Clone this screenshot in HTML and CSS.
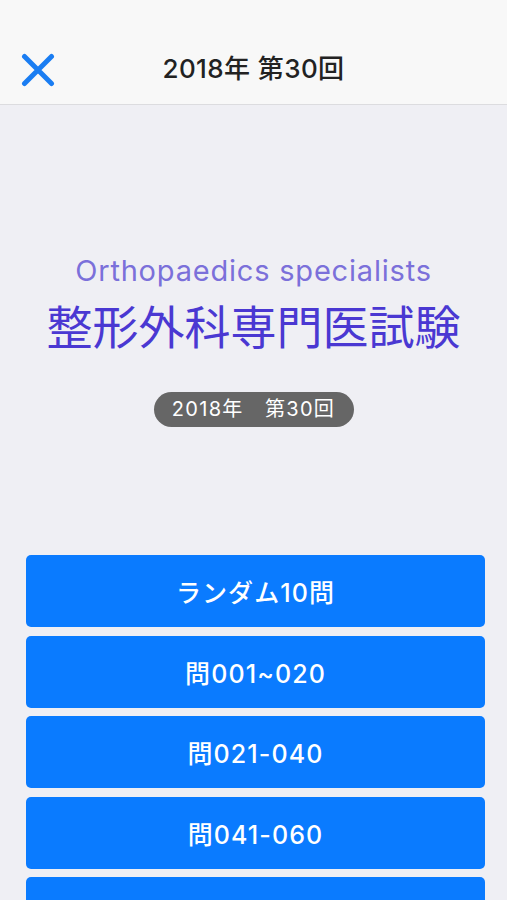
FILE: index.html
```html
<!DOCTYPE html>
<html lang="ja">
<head>
<meta charset="utf-8">
<title>2018年 第30回</title>
<link rel="stylesheet" href="styles.css">
</head>
<body>
<header class="navbar">
  <button class="close" aria-label="閉じる">
    <svg width="34" height="34" viewBox="0 0 34 34"><path d="M3.5 3.5 L30.5 30.5 M30.5 3.5 L3.5 30.5" stroke="#1a7df2" stroke-width="5" stroke-linecap="round" fill="none"/></svg>
  </button>
  <h1 class="nav-title">2018年 第30回</h1>
</header>
<main class="content">
  <p class="subtitle">Orthopaedics specialists</p>
  <h2 class="title">整形外科専門医試験</h2>
  <div class="pill">2018年　第30回</div>
  <div class="buttons">
    <button class="btn">ランダム10問</button>
    <button class="btn">問001~020</button>
    <button class="btn">問021-040</button>
    <button class="btn">問041-060</button>
    <button class="btn">問061-080</button>
  </div>
</main>
</body>
</html>
```
FILE: styles.css
```css
* { box-sizing: border-box; }
html, body {
  margin: 0;
  padding: 0;
  background: #efeff4;
  font-family: Inter, "Noto Sans CJK JP", sans-serif;
  overflow: hidden;
}
.navbar {
  position: relative;
  height: 105px;
  background: #f8f8f8;
  border-bottom: 1px solid #dcdcdf;
  display: flex;
  align-items: flex-end;
  justify-content: center;
  padding-bottom: 18px;
}
.close {
  position: absolute;
  left: 20px;
  top: 52px;
  width: 36px;
  height: 36px;
  padding: 1px;
  border: 0;
  background: transparent;
}
.nav-title {
  margin: 0;
  font-family: Inter, "Noto Sans CJK JP", sans-serif;
  font-size: 26px;
  font-weight: 500;
  letter-spacing: 0.4px;
  color: #222;
  line-height: 34px;
}
.content {
  display: flex;
  flex-direction: column;
  align-items: center;
  padding-top: 149px;
}
.subtitle {
  margin: 0;
  font-family: Inter, sans-serif;
  font-size: 29px;
  letter-spacing: 0.8px;
  line-height: 34px;
  color: #7b70da;
}
.title {
  margin: 6px 0 0;
  font-family: "Noto Sans CJK JP", sans-serif;
  font-weight: 400;
  font-size: 46px;
  line-height: 60px;
  color: #4a38d2;
}
.pill {
  margin-top: 38px;
  width: 200px;
  height: 35px;
  border-radius: 18px;
  background: #666666;
  color: #fff;
  font-family: Inter, "Noto Sans CJK JP", sans-serif;
  font-size: 20px;
  letter-spacing: 1.3px;
  line-height: 35px;
  text-align: center;
}
.buttons {
  margin-top: 128px;
  width: 100%;
  padding: 0 22px 0 26px;
  display: flex;
  flex-direction: column;
  gap: 8.5px;
}
.btn {
  height: 72px;
  border: 0;
  border-radius: 5px;
  background: #0a7bff;
  color: #fff;
  font-family: Inter, "Noto Sans CJK JP", sans-serif;
  font-size: 25px;
  letter-spacing: 1.1px;
  font-weight: 500;
  padding: 0;
}
```
